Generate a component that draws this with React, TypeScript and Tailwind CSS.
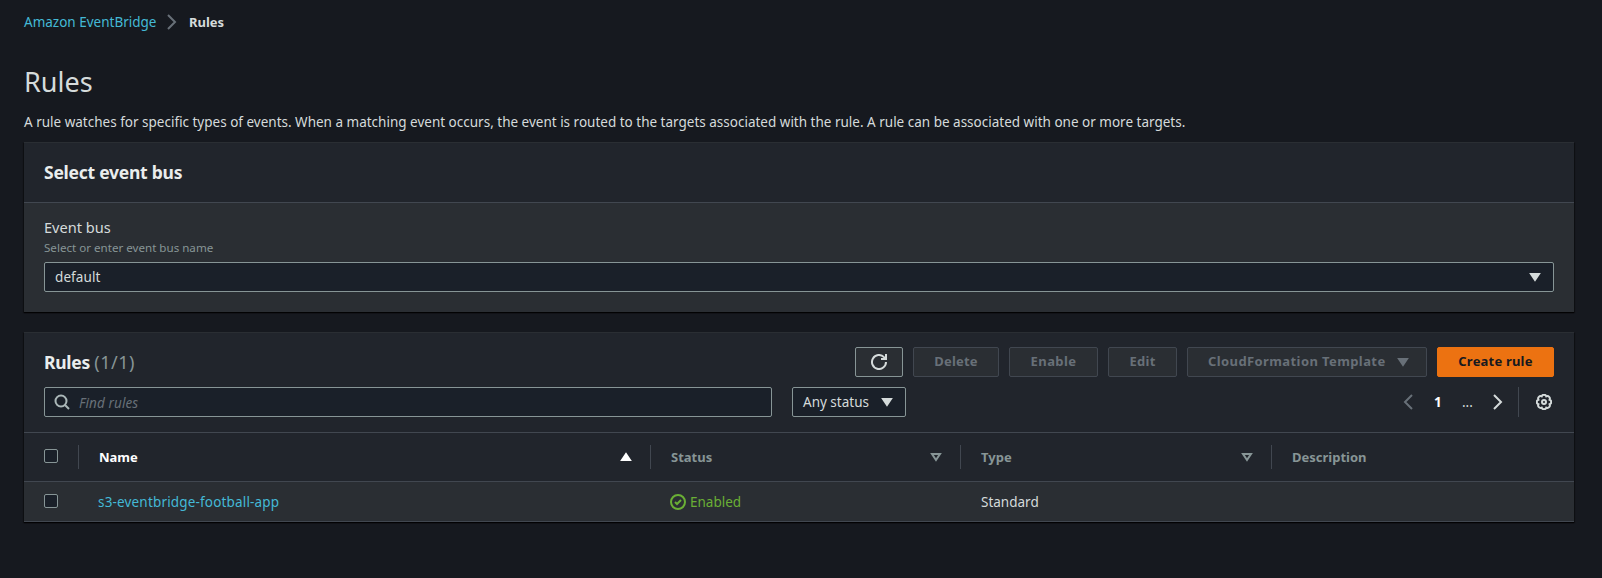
import type { ReactNode } from 'react';

const Caret = ({ className = '', up = false }: { className?: string; up?: boolean }) => (
  <svg className={`h-4 w-4 shrink-0 ${className}`} viewBox="0 0 16 16" fill="currentColor" stroke="currentColor" strokeWidth="2">
    {up ? <path d="M4 11h8L8 5z" /> : <path d="M4 5h8l-4 6z" />}
  </svg>
);

const SortCaret = () => (
  <svg className="h-4 w-4 shrink-0" viewBox="0 0 16 16" fill="none" stroke="currentColor" strokeWidth="2">
    <path d="M4 5h8l-4 6z" />
  </svg>
);

const Angle = ({ className = '', left = false }: { className?: string; left?: boolean }) => (
  <svg className={`h-4 w-4 shrink-0 ${className}`} viewBox="0 0 16 16" fill="none" stroke="currentColor" strokeWidth="2">
    {left ? <path d="M12 1L5 8l7 7" /> : <path d="M4 1l7 7-7 7" />}
  </svg>
);

const Button = ({ children, className }: { children: ReactNode; className: string }) => (
  <button
    className={`flex h-[30px] items-center justify-center rounded-[2px] border border-[#414750] bg-[#2a2e33] text-[13px] font-bold whitespace-nowrap text-[#687078] ${className}`}
  >
    {children}
  </button>
);

const Check = () => <span className="block h-[14px] w-[14px] rounded-[2px] border border-[#879596] bg-[#1a2029]" />;

const Col = ({ label, children, className }: { label: string; children?: ReactNode; className: string }) => (
  <div className={`flex h-6 items-center justify-between border-l border-[#414750] pl-5 ${className}`}>
    <span className="pt-[2px]">{label}</span>
    {children}
  </div>
);

export default function App() {
  return (
    <div className="h-[578px] w-[1602px] overflow-hidden bg-[#16191f] px-6 font-['Noto_Sans',sans-serif] text-[13.5px] text-[#d5dbdb]">
      <nav className="flex h-11 items-center">
        <a className="w-[133px] pt-px whitespace-nowrap text-[#44b9d6]">Amazon EventBridge</a>
        <Angle className="ml-[7px] text-[#687078]" />
        <span className="ml-[9px] pt-px text-[13px] font-bold">Rules</span>
      </nav>
      <h1 className="mt-[20px] h-9 text-[27px] leading-9">Rules</h1>
      <p className="mt-[11px] h-[22px] leading-[22px] whitespace-nowrap">
        A rule watches for specific types of events. When a matching event occurs, the event is routed to the targets associated with the rule. A rule can be associated with one or more targets.
      </p>

      <section className="mt-[9px] h-[170px] w-[1550px] border-t border-[#2a2e33] bg-[#2a2e33] shadow-[0_1px_1px_0_#000c,1px_1px_1px_0_#0004,-1px_1px_1px_0_#0004]">
        <div className="flex h-[60px] items-center border-b border-[#414750] bg-[#21252c] px-5">
          <h2 className="text-[17.5px] font-bold tracking-[-0.25px] text-[#eaeded]">Select event bus</h2>
        </div>
        <div className="px-5 pt-[13px]">
          <div className="h-[23px] text-[14.6px] leading-[22px]">Event bus</div>
          <div className="h-[18px] text-[11.6px] leading-[18px] text-[#879596]">Select or enter event bus name</div>
          <div className="mt-[5px] flex h-[30px] items-center justify-between rounded-[2px] border border-[#879596] bg-[#1a2029] pr-[10px] pl-[10px]">
            <span className="tracking-[0.1px]">default</span>
            <Caret />
          </div>
        </div>
      </section>

      <section className="mt-5 w-[1550px] border-t border-[#2a2e33] bg-[#21252c] shadow-[0_1px_1px_0_#000c,1px_1px_1px_0_#0004,-1px_1px_1px_0_#0004]">
        <div className="flex h-11 items-end gap-[10px] px-5">
          <h2 className="mr-auto h-[30px] text-[17.5px] leading-[30px] font-bold tracking-[-0.25px] text-[#eaeded]">
            Rules <span className="text-lg leading-[30px] font-normal tracking-[0.5px] text-[#879596]">(1/1)</span>
          </h2>
          <Button className="w-12 border-[#879596]! text-[#d5dbdb]!">
            <svg className="h-4 w-4" viewBox="0 0 16 16" fill="none" stroke="currentColor" strokeWidth="2">
              <path d="M10 5h5V0" />
              <path d="M15 8a7 7 0 1 1-2-4.9L15 5" />
            </svg>
          </Button>
          <Button className="w-[86px] tracking-[0.2px]">Delete</Button>
          <Button className="w-[89px] tracking-[0.4px]">Enable</Button>
          <Button className="w-[69px] tracking-[0.3px]">Edit</Button>
          <Button className="w-[240px] justify-start! gap-[9px] pl-[20px] tracking-[0.4px]">
            CloudFormation Template
            <Caret />
          </Button>
          <Button className="w-[117px] border-[#ec7211]! bg-[#ec7211]! tracking-[0.2px] text-[#16191f]!">Create rule</Button>
        </div>
        <div className="mt-[10px] flex h-[30px] items-center px-5">
          <div className="flex h-[30px] w-[728px] items-center rounded-[2px] border border-[#879596] bg-[#1a2029] pl-[9px]">
            <svg className="h-4 w-4 text-[#aab7b8]" viewBox="0 0 16 16" fill="none" stroke="currentColor" strokeWidth="2">
              <circle cx="7" cy="7" r="5.5" />
              <path d="M11 11l4 4" />
            </svg>
            <span className="ml-[9px] pt-[2px] tracking-[0.1px] text-[#687078] italic">Find rules</span>
          </div>
          <div className="ml-5 flex h-[30px] w-[114px] items-center justify-between rounded-[2px] border border-[#879596] bg-[#1a2029] pr-[10px] pl-[10px] whitespace-nowrap">
            <span>Any status</span>
            <Caret />
          </div>
          <div className="ml-auto flex items-center">
            <Angle left className="text-[#687078]" />
            <span className="ml-[18px] w-[8px] font-bold text-white">1</span>
            <span className="ml-[20px] w-[12px]">...</span>
            <Angle className="ml-[16px]" />
            <span className="ml-[12px] h-[30px] w-px bg-[#414750]" />
            <svg className="mr-[2px] ml-[17px] h-4 w-4" viewBox="0 0 16 16" fill="none" stroke="currentColor" strokeWidth="2">
              <path d="M13.6 5.68A2.45 2.45 0 0 1 13.6 10.32A2.45 2.45 0 0 1 10.32 13.6A2.45 2.45 0 0 1 5.68 13.6A2.45 2.45 0 0 1 2.4 10.32A2.45 2.45 0 0 1 2.4 5.68A2.45 2.45 0 0 1 5.68 2.4A2.45 2.45 0 0 1 10.32 2.4A2.45 2.45 0 0 1 13.6 5.68z" />
              <circle cx="8" cy="8" r="2" />
            </svg>
          </div>
        </div>
        <div className="mt-[15px] flex h-[50px] items-center border-y border-[#414750] text-[13px] font-bold text-[#879596]">
          <div className="w-[54px] pb-[2px] pl-5">
            <Check />
          </div>
          <Col label="Name" className="w-[572px] pr-[16px] text-white">
            <Caret up />
          </Col>
          <Col label="Status" className="w-[310px] pr-[16px]">
            <SortCaret />
          </Col>
          <Col label="Type" className="w-[311px] pr-[16px]">
            <SortCaret />
          </Col>
          <Col label="Description" className="flex-1" />
        </div>
        <div className="flex h-10 items-center border-b border-[#414750] bg-[#2a2e33]">
          <div className="w-[74px] pb-[2px] pl-5">
            <Check />
          </div>
          <a className="w-[572px] pt-[2px] tracking-[0.17px] text-[#44b9d6]">s3-eventbridge-football-app</a>
          <div className="flex w-[311px] items-center gap-1 text-[#6aaf35]">
            <svg className="h-4 w-4" viewBox="0 0 16 16" fill="none" stroke="currentColor" strokeWidth="2">
              <circle cx="8" cy="8" r="7" />
              <path d="M5 8l2 2 4-4" />
            </svg>
            <span className="pt-[2px]">Enabled</span>
          </div>
          <span className="pt-[2px]">Standard</span>
        </div>
      </section>
    </div>
  );
}
